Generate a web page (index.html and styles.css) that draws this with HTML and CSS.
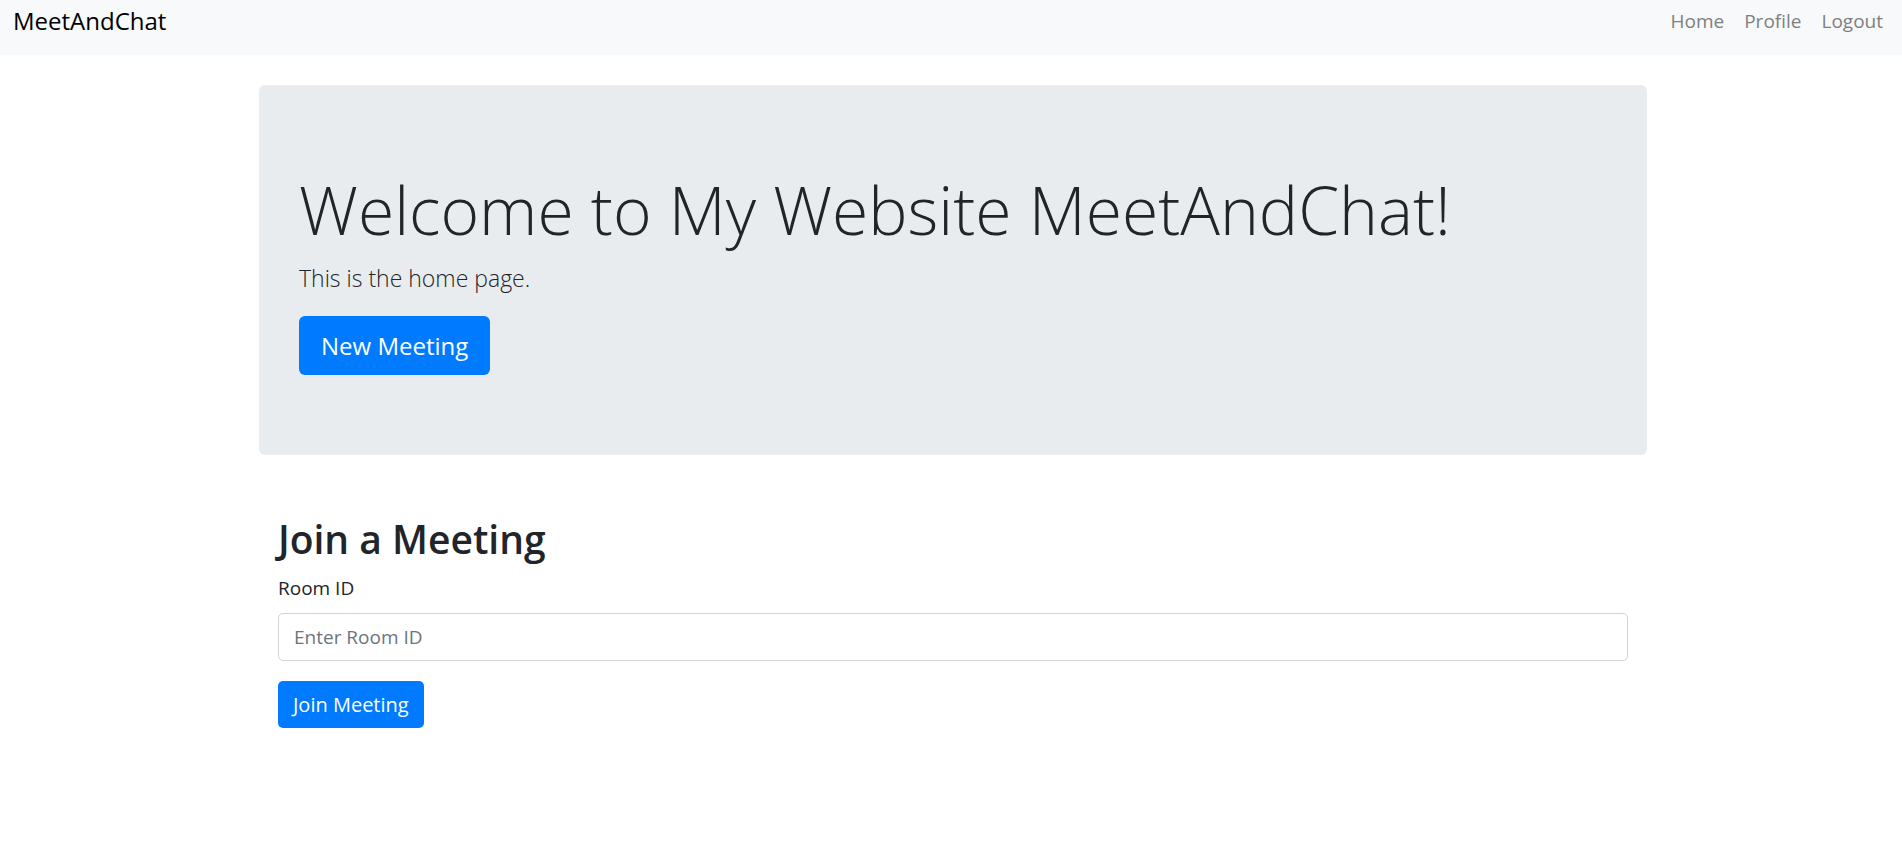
FILE: index.html
```html
<!DOCTYPE html>
<html lang="en">
<head>
<meta charset="utf-8">
<meta name="viewport" content="width=device-width, initial-scale=1">
<title>MeetAndChat</title>
<link rel="stylesheet" href="styles.css">
</head>
<body>
<nav class="navbar">
  <a class="brand" href="#">MeetAndChat</a>
  <ul class="nav-links">
    <li><a href="#">Home</a></li>
    <li><a href="#">Profile</a></li>
    <li><a href="#">Logout</a></li>
  </ul>
</nav>
<main class="container">
  <section class="jumbotron">
    <h1 class="display">Welcome to My Website MeetAndChat!</h1>
    <p class="lead">This is the home page.</p>
    <a class="btn btn-lg" href="#">New Meeting</a>
  </section>
  <section class="join">
    <h2 class="join-title">Join a Meeting</h2>
    <form class="join-form">
      <label for="room">Room ID</label>
      <input id="room" class="field" type="text" placeholder="Enter Room ID">
      <button class="btn" type="submit">Join Meeting</button>
    </form>
  </section>
</main>
</body>
</html>
```
FILE: styles.css
```css
* { box-sizing: border-box; }
body {
  margin: 0;
  font-family: "Segoe UI", "Open Sans", "Noto Sans", sans-serif;
  font-size: 19px;
  line-height: 30px;
  color: #212529;
  background: #fff;
}
a { text-decoration: none; }
.navbar {
  display: flex;
  justify-content: space-between;
  padding: 6px 19px 19px 13px;
  background: #f8f9fa;
}
.brand { font-size: 24px; color: #000; }
.nav-links {
  display: flex;
  gap: 20px;
  margin: 0;
  padding: 0;
  list-style: none;
}
.nav-links a { color: #7f8080; }
.container {
  max-width: 1392px;
  margin: 30px auto 0;
  padding-left: 4px;
}
.jumbotron {
  display: flex;
  flex-direction: column;
  align-items: flex-start;
  padding: 80px 40px;
  border-radius: 6px;
  background: #e9ecef;
}
.display {
  margin: 0 0 8px;
  font-size: 66px;
  font-weight: 300;
  line-height: 88px;
}
.lead {
  margin: 0 0 20px;
  font-size: 23px;
  font-weight: 300;
  line-height: 35px;
}
.btn {
  padding: 8px 15px;
  border: 0;
  border-radius: 5px;
  background: #007bff;
  color: #fff;
  font: inherit;
  font-size: 20px;
  line-height: 31px;
}
.btn-lg { padding: 10px 22px; font-size: 24px; line-height: 39px; border-radius: 6px; }
.join { padding: 60px 19px 0; }
.join-title {
  margin: 0 0 10px;
  font-size: 39px;
  font-weight: 600;
  line-height: 48px;
}
.join-form { display: flex; flex-direction: column; align-items: flex-start; }
.field {
  width: 100%;
  height: 48px;
  margin: 10px 0 20px;
  padding: 8px 15px;
  border: 1px solid #ced4da;
  border-radius: 5px;
  font: inherit;
}
.field::placeholder { color: #6c757d; opacity: 1; }
```
